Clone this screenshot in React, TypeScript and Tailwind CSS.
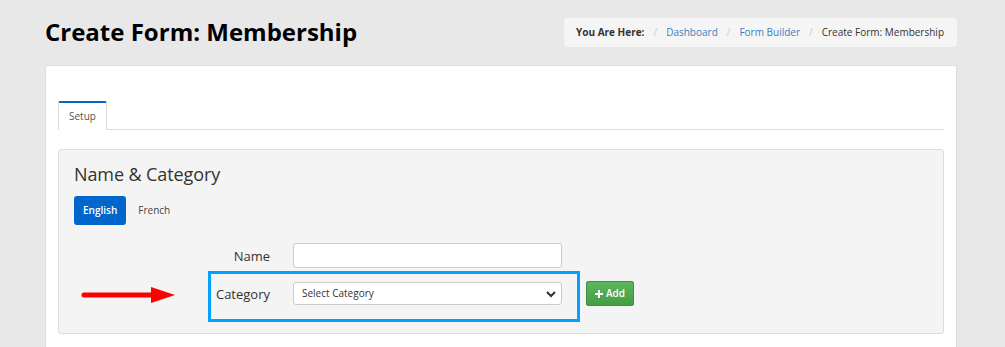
import React from 'react';

const Crumbs: React.FC = () => (
  <div className="flex items-center h-[29px] pl-[12px] pr-[13px] rounded bg-[#f5f5f5] text-[10px] text-[#333]">
    <span className="font-bold">You Are Here:</span>
    <span className="mx-[9px] text-[#ccc]">/</span>
    <a className="text-[#3a7fc1]">Dashboard</a>
    <span className="mx-[9px] text-[#ccc]">/</span>
    <a className="text-[#3a7fc1]">Form Builder</a>
    <span className="mx-[9px] text-[#ccc]">/</span>
    <span>Create Form: Membership</span>
  </div>
);

const App: React.FC = () => {
  return (
    <div className="min-h-[347px] h-[347px] overflow-hidden bg-[#e8e8e8] font-['Open_Sans',sans-serif] text-[#333]">
      <div className="flex items-center justify-between pl-[45px] pr-[48px] pt-[17px]">
        <h1 className="text-[24px] leading-[30px] font-bold text-black">Create Form: Membership</h1>
        <Crumbs />
      </div>

      {/* main card */}
      <div className="mt-[18px] ml-[45px] w-[912px] h-[300px] bg-white border border-[#ddd] rounded-[3px] px-[12px] pt-[35px]">
        <div className="flex border-b border-[#ddd]">
          <div className="h-[29px] px-[10px] flex items-center text-[10px] text-[#555] border-t-2 border-t-[#0066cc] border-x border-[#ddd] bg-white rounded-t-[2px] -mb-px">
            Setup
          </div>
        </div>

        <div className="relative mt-[19px] h-[185px] bg-[#f4f4f4] border border-[#ddd] rounded-[3px] px-[15px] pt-[12px]">
          <h2 className="text-[18px] leading-[24px] text-[#333] tracking-[-0.1px]">Name &amp; Category</h2>
          <div className="mt-[10px] flex items-center gap-[12px]">
            <button className="h-[29px] px-[9px] rounded-[3px] bg-[#0066cc] text-white text-[10px] font-semibold">English</button>
            <span className="text-[10px] text-[#444]">French</span>
          </div>

          <div className="mt-[18px] flex items-center">
            <label className="w-[196px] text-right text-[13px] text-[#333] pt-[2px]">Name</label>
            <input className="ml-[23px] w-[269px] h-[25px] bg-white border border-[#ccc] rounded-[3px]" />
          </div>

          <div className="mt-[13px] flex items-center">
            <label className="w-[196px] text-right text-[13px] text-[#333] pt-[3px]">Category</label>
            <div className="ml-[23px] w-[269px] h-[23px] bg-white border border-[#ccc] rounded-[3px] flex items-center justify-between pl-[8px] pr-[4px]">
              <span className="text-[10px] text-[#333]">Select Category</span>
              <svg width="12" height="12" viewBox="0 0 12 12">
                <path d="M2 4l4 4 4-4" fill="none" stroke="#333" strokeWidth="2" />
              </svg>
            </div>
            <button className="ml-[24px] h-[25px] w-[48px] rounded-[2px] border border-[#3d9140] bg-gradient-to-b from-[#5cb85c] to-[#449d44] text-white text-[10px] font-semibold flex items-center justify-center gap-[3px]">
              <svg width="8" height="8" viewBox="0 0 8 8"><path d="M3 0h2v3h3v2H5v3H3V5H0V3h3z" fill="#fff" /></svg>
              Add
            </button>
          </div>

          {/* annotations */}
          <div className="absolute left-[149px] top-[121px] w-[372px] h-[51px] border-[3px] border-[#00a2ff]" />
          <svg className="absolute left-[22px] top-[135px]" width="96" height="20" viewBox="0 0 96 20">
            <line x1="3" y1="10" x2="72" y2="10" stroke="#ff0000" strokeWidth="5" strokeLinecap="round" />
            <path d="M70 2L94 10L70 18z" fill="#ff0000" />
          </svg>
        </div>
      </div>
    </div>
  );
};

export default App;
